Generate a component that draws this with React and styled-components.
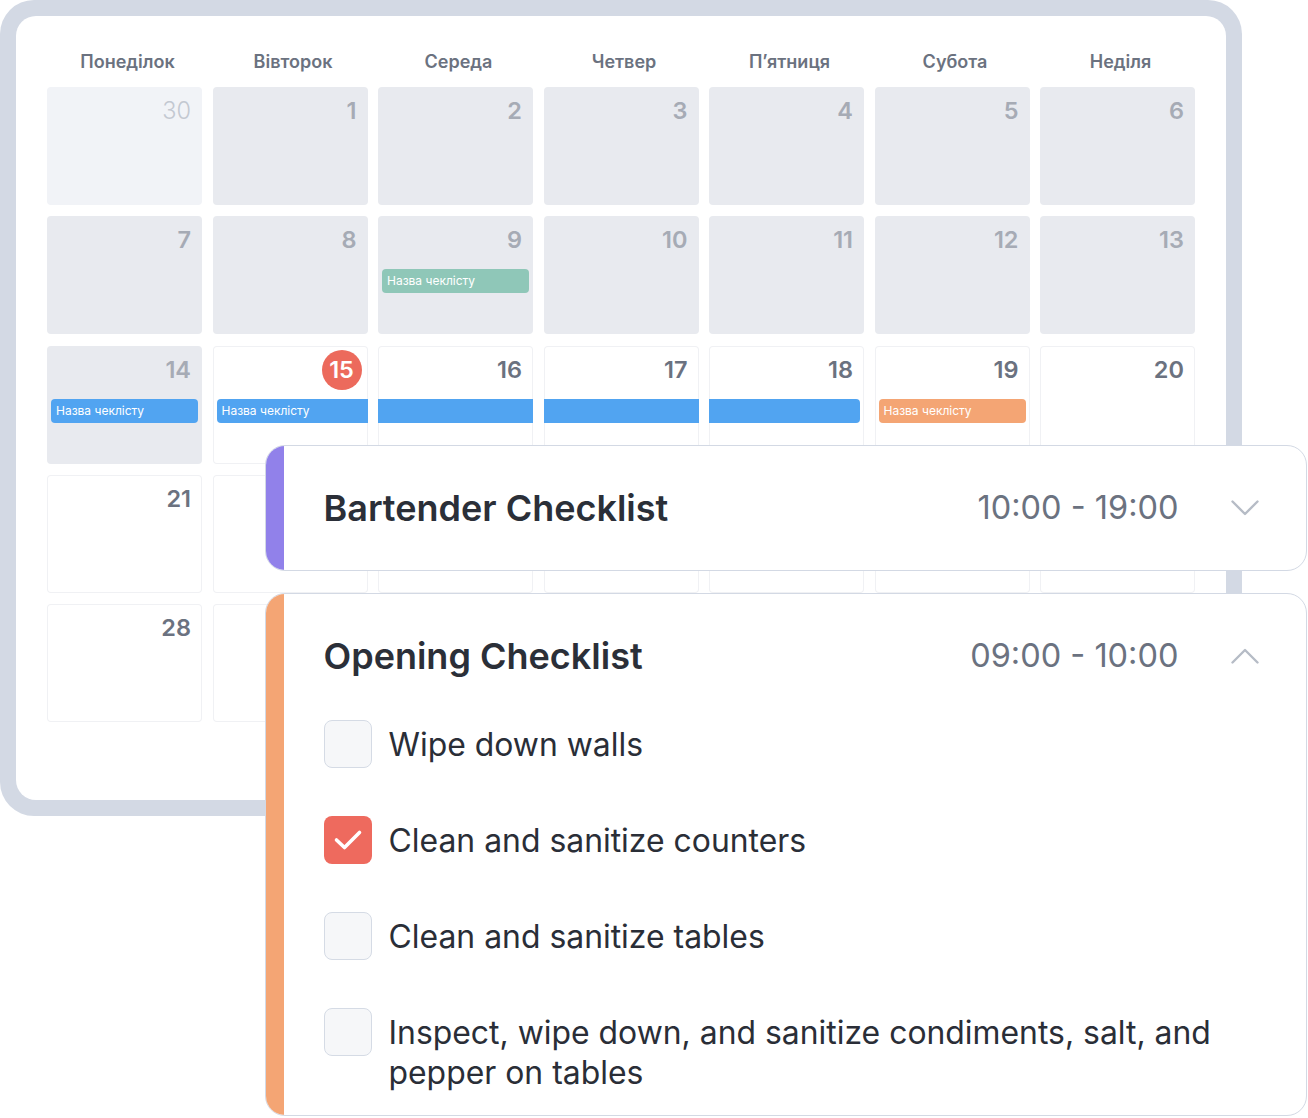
import React from 'react';
import styled, { createGlobalStyle, css } from 'styled-components';

const GlobalStyle = createGlobalStyle`
  html, body {
    margin: 0;
    padding: 0;
    background: #ffffff;
  }
  body {
    font-family: Inter, 'Noto Sans', 'Liberation Sans', sans-serif;
    -webkit-font-smoothing: antialiased;
  }
  * {
    box-sizing: border-box;
  }
`;

const Page = styled.div`
  position: relative;
  width: 1308px;
  height: 1118px;
  overflow: hidden;
`;

const Frame = styled.div`
  width: 1242px;
  height: 816px;
  padding: 16px;
  border-radius: 34px;
  background: #d3d9e4;
`;

const Screen = styled.div`
  height: 100%;
  padding: 34px 31px 0;
  border-radius: 20px;
  background: #ffffff;
`;

const WeekHeader = styled.div`
  display: grid;
  grid-template-columns: repeat(7, 1fr);
  column-gap: 10.5px;
  margin-bottom: 13px;
`;

const DayName = styled.div`
  height: 24px;
  line-height: 24px;
  text-align: center;
  padding-left: 6px;
  font-size: 18px;
  font-weight: 600;
  color: #6b7280;
`;

const Grid = styled.div`
  display: grid;
  grid-template-columns: repeat(7, 1fr);
  grid-auto-rows: 118px;
  column-gap: 10.5px;
  row-gap: 11.25px;
`;

const cellTones = {
  prev: css`
    background: #f1f3f7;
  `,
  past: css`
    background: #e8eaef;
  `,
  future: css`
    background: #ffffff;
    box-shadow: inset 0 0 0 1px #f0f1f4;
  `,
};

const Cell = styled.div`
  border-radius: 4px;
  ${({ $tone }) => cellTones[$tone]}
`;

const NumberRow = styled.div`
  display: flex;
  justify-content: flex-end;
  align-items: center;
  height: 28px;
  margin-top: 10px;
  padding-right: 11px;
`;

const DayNumber = styled.span`
  font-size: 23.5px;
  line-height: 28px;
  font-weight: ${({ $tone }) => ($tone === 'prev' ? 300 : 600)};
  color: ${({ $tone }) =>
    $tone === 'prev' ? '#c3c8d1' : $tone === 'past' ? '#a6abb5' : '#6b7280'};
`;

const TodayBadge = styled.span`
  display: flex;
  align-items: center;
  justify-content: center;
  width: 40px;
  height: 40px;
  margin-right: -5px;
  border-radius: 50%;
  background: #ec6a5c;
  color: #ffffff;
  font-size: 23.5px;
  font-weight: 600;
`;

const eventColors = {
  blue: '#51a4f1',
  green: '#8fc7b8',
  orange: '#f4a574',
};

const EventBar = styled.div`
  height: 24px;
  margin-top: 15px;
  margin-left: ${({ $part }) => ($part === 'single' || $part === 'start' ? '4px' : '0')};
  margin-right: ${({ $part }) => ($part === 'single' || $part === 'end' ? '4px' : '0')};
  padding-left: 5px;
  border-radius: ${({ $part }) =>
    $part === 'single'
      ? '4px'
      : $part === 'start'
      ? '4px 0 0 4px'
      : $part === 'end'
      ? '0 4px 4px 0'
      : '0'};
  background: ${({ $color }) => eventColors[$color]};
  color: #ffffff;
  font-size: 12px;
  line-height: 24px;
  white-space: nowrap;
  overflow: hidden;
`;

const Overlay = styled.div`
  position: absolute;
  left: 265px;
  top: 445px;
  width: 1043px;
  display: flex;
  flex-direction: column;
  gap: 22px;
`;

const Card = styled.div`
  display: flex;
  width: 1042px;
  border: 1.5px solid #d3d9e4;
  border-radius: 20px;
  background: #ffffff;
  overflow: hidden;
`;

const Accent = styled.div`
  flex: 0 0 18px;
  background: ${({ $color }) => $color};
`;

const CardBody = styled.div`
  flex: 1;
  padding: 0 47.5px 0 39.5px;
`;

const CardHeader = styled.div`
  display: flex;
  align-items: center;
  height: 124px;
`;

const CardTitle = styled.h2`
  flex: 1;
  margin: 0;
  font-size: 36px;
  line-height: 40px;
  font-weight: 600;
  color: #2b2f38;
`;

const TimeRange = styled.span`
  font-size: 32.5px;
  line-height: 40px;
  font-weight: 400;
  color: #6b7280;
  margin-right: 52px;
`;

const TaskList = styled.ul`
  list-style: none;
  margin: 0;
  padding: 1.5px 0 22px;
  display: flex;
  flex-direction: column;
  gap: 48px;
`;

const Task = styled.li`
  display: flex;
  align-items: flex-start;
  gap: 17px;
`;

const CheckBox = styled.span`
  flex: 0 0 48px;
  display: flex;
  align-items: center;
  justify-content: center;
  height: 48px;
  border-radius: 8px;
  ${({ $checked }) =>
    $checked
      ? css`
          background: #ee6a5e;
        `
      : css`
          background: #f6f7f9;
          border: 1.5px solid #d5dbe5;
        `}
`;

const TaskText = styled.span`
  padding-top: 5px;
  font-size: 31.9px;
  line-height: 40px;
  color: #2a2e37;
`;

const Chevron = ({ up }) => (
  <svg width="28" height="16" viewBox="0 0 28 16" fill="none">
    <polyline
      points={up ? '1.5,14.5 14,2 26.5,14.5' : '1.5,1.5 14,14 26.5,1.5'}
      stroke="#b6bcc6"
      strokeWidth="2.4"
      strokeLinecap="round"
      strokeLinejoin="round"
    />
  </svg>
);

const Check = () => (
  <svg width="48" height="48" viewBox="0 0 48 48" fill="none">
    <polyline
      points="12.5,24 20.5,31.5 35.5,16.5"
      stroke="#ffffff"
      strokeWidth="3.6"
      strokeLinecap="round"
      strokeLinejoin="round"
    />
  </svg>
);

const dayNames = ['Понеділок', 'Вівторок', 'Середа', 'Четвер', 'П’ятниця', 'Субота', 'Неділя'];

const EVENT = 'Назва чеклісту';

const days = [
  { n: 30, tone: 'prev' },
  { n: 1, tone: 'past' },
  { n: 2, tone: 'past' },
  { n: 3, tone: 'past' },
  { n: 4, tone: 'past' },
  { n: 5, tone: 'past' },
  { n: 6, tone: 'past' },
  { n: 7, tone: 'past' },
  { n: 8, tone: 'past' },
  { n: 9, tone: 'past', event: { color: 'green', part: 'single', label: EVENT } },
  { n: 10, tone: 'past' },
  { n: 11, tone: 'past' },
  { n: 12, tone: 'past' },
  { n: 13, tone: 'past' },
  { n: 14, tone: 'past', event: { color: 'blue', part: 'single', label: EVENT } },
  { n: 15, tone: 'future', today: true, event: { color: 'blue', part: 'start', label: EVENT } },
  { n: 16, tone: 'future', event: { color: 'blue', part: 'middle' } },
  { n: 17, tone: 'future', event: { color: 'blue', part: 'middle' } },
  { n: 18, tone: 'future', event: { color: 'blue', part: 'end' } },
  { n: 19, tone: 'future', event: { color: 'orange', part: 'single', label: EVENT } },
  { n: 20, tone: 'future' },
  { n: 21, tone: 'future' },
  { n: 22, tone: 'future' },
  { n: 23, tone: 'future' },
  { n: 24, tone: 'future' },
  { n: 25, tone: 'future' },
  { n: 26, tone: 'future' },
  { n: 27, tone: 'future' },
  { n: 28, tone: 'future' },
  { n: 29, tone: 'future' },
  { n: 30, tone: 'future' },
  { n: 31, tone: 'future' },
  { n: 1, tone: 'future' },
  { n: 2, tone: 'future' },
  { n: 3, tone: 'future' },
];

const tasks = [
  { text: 'Wipe down walls', done: false },
  { text: 'Clean and sanitize counters', done: true },
  { text: 'Clean and sanitize tables', done: false },
  { text: 'Inspect, wipe down, and sanitize condiments, salt, and pepper on tables', done: false },
];

const App = () => (
  <Page>
    <GlobalStyle />
    <Frame>
      <Screen>
        <WeekHeader>
          {dayNames.map((name) => (
            <DayName key={name}>{name}</DayName>
          ))}
        </WeekHeader>
        <Grid>
          {days.map((day, i) => (
            <Cell key={i} $tone={day.tone}>
              <NumberRow>
                {day.today ? (
                  <TodayBadge>{day.n}</TodayBadge>
                ) : (
                  <DayNumber $tone={day.tone}>{day.n}</DayNumber>
                )}
              </NumberRow>
              {day.event && (
                <EventBar $color={day.event.color} $part={day.event.part}>
                  {day.event.label}
                </EventBar>
              )}
            </Cell>
          ))}
        </Grid>
      </Screen>
    </Frame>

    <Overlay>
      <Card>
        <Accent $color="#9181ea" />
        <CardBody>
          <CardHeader>
            <CardTitle>Bartender Checklist</CardTitle>
            <TimeRange>10:00 - 19:00</TimeRange>
            <Chevron />
          </CardHeader>
        </CardBody>
      </Card>

      <Card>
        <Accent $color="#f4a574" />
        <CardBody>
          <CardHeader>
            <CardTitle>Opening Checklist</CardTitle>
            <TimeRange>09:00 - 10:00</TimeRange>
            <Chevron up />
          </CardHeader>
          <TaskList>
            {tasks.map((task) => (
              <Task key={task.text}>
                <CheckBox $checked={task.done}>{task.done && <Check />}</CheckBox>
                <TaskText>{task.text}</TaskText>
              </Task>
            ))}
          </TaskList>
        </CardBody>
      </Card>
    </Overlay>
  </Page>
);

export default App;
